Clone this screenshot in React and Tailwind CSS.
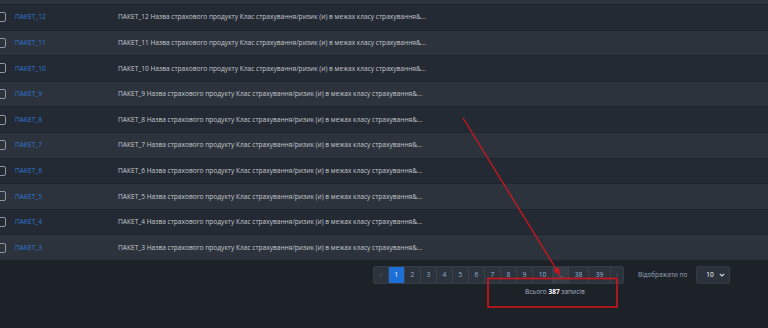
import React from "react";

const rows = [12, 11, 10, 9, 8, 7, 6, 5, 4, 3];

const pages = [
    { label: "‹", w: "w-[15px]", muted: true },
    { label: "1", w: "w-[16px]", active: true },
    { label: "2", w: "w-[16px]" },
    { label: "3", w: "w-[16px]" },
    { label: "4", w: "w-[16px]" },
    { label: "5", w: "w-[16px]" },
    { label: "6", w: "w-[16px]" },
    { label: "7", w: "w-[16px]" },
    { label: "8", w: "w-[16px]" },
    { label: "9", w: "w-[16px]" },
    { label: "10", w: "w-[20px]" },
    { label: "…", w: "w-[16px]", hover: true },
    { label: "38", w: "w-[20px]" },
    { label: "39", w: "w-[22px]" },
    { label: "›", w: "w-[12px]", muted: true },
];

function Row({ n, idx }) {
    const bg = idx % 2 === 0 ? "bg-[#242a33]" : "bg-[#2c333c]";
    return (
        <div className={`flex items-center h-[25.6px] border-b border-[#20252d] ${bg}`}>
            <div className="w-[15px] shrink-0 flex items-center">
                <span className="-ml-[4px] w-[10px] h-[10px] border border-[#8d96a1] rounded-[2px]" />
            </div>
            <a className="w-[103px] shrink-0 text-[#2f78d6]">ПАКЕТ_{n}</a>
            <span className="text-[#c3c8ce] whitespace-nowrap">
                ПАКЕТ_{n} Назва страхового продукту Клас страхування/ризик (и) в межах класу страхування&amp;...
            </span>
        </div>
    );
}

export default function App() {
    return (
        <div
            className="relative w-[768px] h-[328px] overflow-hidden bg-[#1d2229] text-[6.6px]"
            style={{ fontFamily: '"Open Sans", "Noto Sans", sans-serif' }}
        >
            <div className="h-[5px] bg-[#2c333c] border-b border-[#20252d]" />
            {rows.map((n, i) => (
                <Row key={n} n={n} idx={i} />
            ))}

            <div className="flex items-start pt-[5px]">
                <div className="ml-[373px] flex flex-col">
                    <div className="flex h-[18px] rounded-[2px] overflow-hidden bg-[#2c333c] border border-[#353c46]">
                        {pages.map((p, i) => (
                            <div
                                key={i}
                                className={`${p.w} flex items-center justify-center border-r border-[#3a414b] last:border-r-0 ${
                                    p.active
                                        ? "bg-[#1c6fd6] text-white"
                                        : p.hover
                                        ? "bg-[#353c45] text-[#7f8a97]"
                                        : p.muted
                                        ? "text-[#6f7a87]"
                                        : "text-[#8fb2dc]"
                                }`}
                            >
                                {p.label}
                            </div>
                        ))}
                    </div>
                    <div className="mt-[3px] ml-[152px] text-[6.5px] text-[#a8b3c0] whitespace-nowrap">
                        Всього <b className="text-white font-bold">387</b> записів
                    </div>
                </div>
                <div className="ml-[14px] flex items-center h-[18px] text-[6.4px] text-[#98a7ba]">Відображати по</div>
                <div className="ml-[9px] w-[34px] h-[18px] rounded-[2px] bg-[#2b323b] border border-[#333a44] flex items-center justify-between pl-[9px] pr-[4px] text-white">
                    <span>10</span>
                    <svg width="6" height="4" viewBox="0 0 6 4">
                        <path d="M0.8 0.8 L3 3 L5.2 0.8" stroke="#d8dde3" strokeWidth="1.2" fill="none" />
                    </svg>
                </div>
            </div>

            <svg className="absolute inset-0 pointer-events-none" width="768" height="328">
                <line x1="463" y1="118" x2="558" y2="272" stroke="#d0161c" strokeWidth="1.3" />
                <path d="M560 276 L553.5 270.5 L558.8 267.3 Z" fill="#d0161c" />
                <rect x="488" y="278.5" width="129" height="28.5" fill="none" stroke="#d0161c" strokeWidth="1.6" />
            </svg>
        </div>
    );
}
